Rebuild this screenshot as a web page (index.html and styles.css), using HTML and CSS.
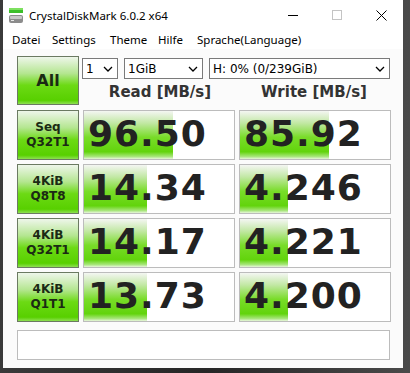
FILE: index.html
```html
<!DOCTYPE html>
<html lang="en">
<head>
  <meta charset="UTF-8">
  <title>CrystalDiskMark 6.0.2 x64</title>
  <link rel="stylesheet" href="styles.css">
</head>
<body>

<div class="window">
  <div class="titlebar">
    <svg class="app-icon" width="16" height="16" viewBox="0 0 16 16">
      <rect x="1" y="0" width="14" height="5" fill="#3cbf2a"/>
      <rect x="1" y="0" width="14" height="2" fill="#7ee060"/>
      <rect x="1" y="7" width="14" height="8" rx="2" fill="#8c8c8c"/>
      <rect x="2" y="8" width="12" height="3" rx="1" fill="#c8c8c8"/>
      <rect x="3" y="12" width="3" height="1" fill="#e8e8e8"/>
    </svg>
    <span class="title">CrystalDiskMark 6.0.2 x64</span>
    <div class="controls">
      <svg width="10" height="10" viewBox="0 0 10 10"><line x1="0" y1="5.5" x2="10" y2="5.5" stroke="#000" stroke-width="1"/></svg>
      <svg width="10" height="10" viewBox="0 0 10 10"><rect x="0.5" y="0.5" width="9" height="9" fill="none" stroke="#c4c4c4"/></svg>
      <svg width="11" height="11" viewBox="0 0 11 11"><path d="M0.5 0.5 L10.5 10.5 M10.5 0.5 L0.5 10.5" stroke="#000" stroke-width="1"/></svg>
    </div>
  </div>

  <div class="menubar">
    <span class="m-datei">Datei</span>
    <span class="m-settings">Settings</span>
    <span class="m-theme">Theme</span>
    <span class="m-hilfe">Hilfe</span>
    <span>Sprache(Language)</span>
  </div>

  <div class="content">
    <div class="top">
      <div class="btn all">All</div>
      <div class="top-right">
        <div class="selects">
          <div class="select s-count">1<svg viewBox="0 0 10 6"><path d="M1 1 L5 5 L9 1" fill="none" stroke="#000" stroke-width="1.3"/></svg></div>
          <div class="select s-size">1GiB<svg viewBox="0 0 10 6"><path d="M1 1 L5 5 L9 1" fill="none" stroke="#000" stroke-width="1.3"/></svg></div>
          <div class="select s-drive">H: 0% (0/239GiB)<svg viewBox="0 0 10 6"><path d="M1 1 L5 5 L9 1" fill="none" stroke="#000" stroke-width="1.3"/></svg></div>
        </div>
        <div class="heads">
          <div class="head">Read [MB/s]</div>
          <div class="head">Write [MB/s]</div>
        </div>
      </div>
    </div>

    <div class="rows">
      <div class="row">
        <div class="btn label">Seq<br>Q32T1</div>
        <div class="result"><div class="bar" style="width: 59%"></div><span>96.50</span></div>
        <div class="result"><div class="bar" style="width: 59%"></div><span>85.92</span></div>
      </div>
      <div class="row">
        <div class="btn label">4KiB<br>Q8T8</div>
        <div class="result"><div class="bar" style="width: 42%"></div><span>14.34</span></div>
        <div class="result"><div class="bar" style="width: 32%"></div><span>4.246</span></div>
      </div>
      <div class="row">
        <div class="btn label">4KiB<br>Q32T1</div>
        <div class="result"><div class="bar" style="width: 42%"></div><span>14.17</span></div>
        <div class="result"><div class="bar" style="width: 32%"></div><span>4.221</span></div>
      </div>
      <div class="row">
        <div class="btn label">4KiB<br>Q1T1</div>
        <div class="result"><div class="bar" style="width: 42%"></div><span>13.73</span></div>
        <div class="result"><div class="bar" style="width: 32%"></div><span>4.200</span></div>
      </div>
    </div>

    <div class="message"></div>
  </div>
</div>

</body>
</html>
```

FILE: styles.css
```css
body {
  margin: 0;
  background: linear-gradient(90deg, #3a3a3a, #262626 50%, #4a4a4a);
  height: 373px;
  overflow: hidden;
}
.window {
  margin-left: 3px;
  width: 400px;
  height: 368px;
  background: #fbfbfb;
  font-family: "Noto Sans", sans-serif;
}
.titlebar {
  height: 30px;
  display: flex;
  align-items: center;
  background: #fff;
}
.app-icon {
  margin-left: 5px;
  margin-top: 1px;
}
.title {
  margin-left: 5px;
  font-size: 11.5px;
  color: #000;
}
.controls {
  margin-left: auto;
  display: flex;
  align-items: center;
}
.controls svg:nth-child(1) { margin-right: 34px; }
.controls svg:nth-child(2) { margin-right: 34px; }
.controls svg:nth-child(3) { margin-right: 16px; }
.menubar {
  height: 19px;
  display: flex;
  align-items: center;
  font-size: 11.5px;
  background: #fff;
  padding-left: 9px;
  white-space: nowrap;
}
.m-datei { width: 40px; }
.m-settings { width: 58px; }
.m-theme { width: 48px; }
.m-hilfe { width: 39px; }
.content {
  padding: 7px 0 0 14px;
}
.top {
  display: flex;
}
.btn {
  box-sizing: border-box;
  width: 62px;
  border: 1px solid #6b7a62;
  background: linear-gradient(#eef6ea, #b4e690 35%, #6cda14 60%, #58d000 92%, #8ee052);
  display: flex;
  align-items: center;
  justify-content: center;
  text-align: center;
  font-family: "DejaVu Sans", sans-serif;
  font-weight: bold;
  color: #1b2a14;
}
.all {
  height: 49px;
  font-size: 16px;
}
.top-right {
  margin-left: 3px;
}
.selects {
  display: flex;
  margin-top: 2px;
  height: 21px;
}
.select {
  box-sizing: border-box;
  height: 21px;
  border: 1px solid #7a7a7a;
  background: #fff;
  display: flex;
  align-items: center;
  padding-left: 3px;
  font-family: "DejaVu Sans", sans-serif;
  font-size: 12px;
  margin-right: 6px;
}
.select svg {
  width: 10px;
  height: 6px;
  margin-left: auto;
  margin-right: 4px;
}
.s-count { width: 36px; }
.s-size { width: 79px; }
.s-drive { width: 181px; margin-right: 0; }
.heads {
  display: flex;
  margin-top: 2px;
}
.head {
  text-align: center;
  font-family: "DejaVu Sans", sans-serif;
  font-weight: bold;
  font-size: 15px;
  color: #333;
  height: 22px;
  line-height: 22px;
}
.head:first-child { width: 154px; margin-left: 1px; }
.head:last-child { width: 154px; }
.rows {
  margin-top: 5px;
  display: flex;
  flex-direction: column;
  gap: 4px;
}
.row {
  display: flex;
  gap: 4px;
  height: 50px;
}
.label {
  height: 50px;
  font-size: 12px;
  line-height: 15px;
}
.result {
  box-sizing: border-box;
  position: relative;
  width: 152px;
  border: 1px solid #bcbcbc;
  background: #fff;
  display: flex;
  align-items: center;
}
.bar {
  position: absolute;
  left: 0;
  top: 0;
  bottom: 0;
  background: linear-gradient(#f4f6f2, #c2e8a4 25%, #78dc28 55%, #62d40c 85%, #a8e67c 95%, #e8f6dc);
}
.result span {
  position: relative;
  padding-left: 4px;
  margin-top: -4px;
  font-family: "DejaVu Sans", sans-serif;
  font-weight: bold;
  font-size: 36px;
  color: #222;
  letter-spacing: 1px;
}
.message {
  box-sizing: border-box;
  margin-top: 8px;
  width: 373px;
  height: 30px;
  border: 1px solid #bcbcbc;
  background: #fff;
}
```
